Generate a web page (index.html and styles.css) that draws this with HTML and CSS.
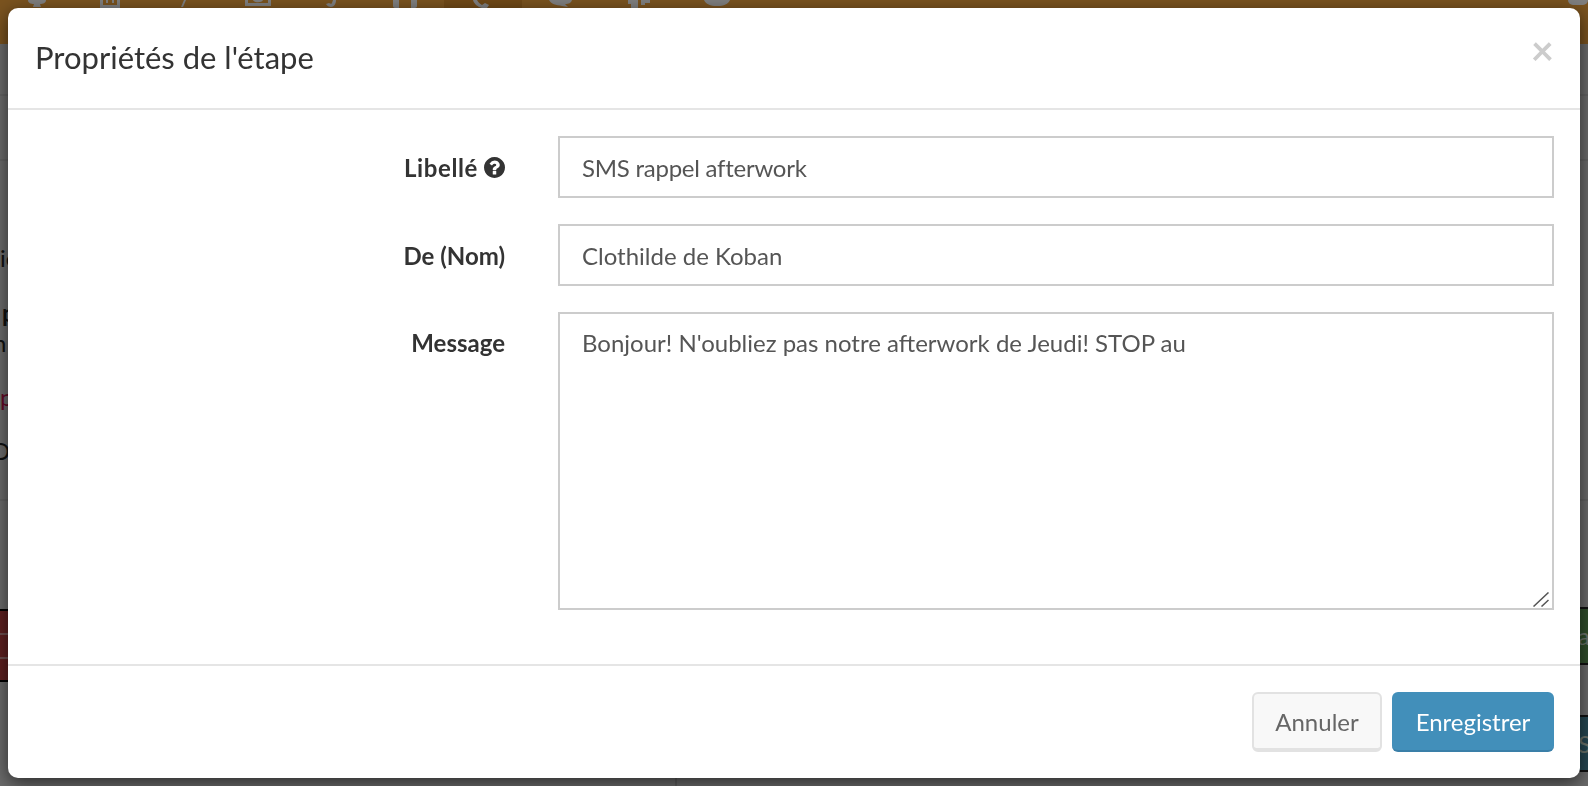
FILE: index.html
```html
<!DOCTYPE html>
<html lang="fr">

<head>
    <meta charset="UTF-8">
    <title>Propriétés de l'étape</title>
    <link rel="stylesheet" href="styles.css">
</head>

<body>
    <div class="page">
        <div class="topbar">
            <div class="tool"><svg width="18" height="8" viewBox="0 0 18 8"><path d="M0 0h18c0 3-3 4-6 4l1 3H5l1-3C3 4 0 3 0 0z" /></svg></div>
            <div class="tool"><svg width="20" height="8" viewBox="0 0 20 8"><path d="M0 0h3v5h14V0h3v8H0zM6 0h2v3H6zm6 0h2v3h-2z" /></svg></div>
            <div class="tool"><svg width="5" height="8" viewBox="0 0 5 8"><path d="M3 0h2L2 7H0z" /></svg></div>
            <div class="tool"><svg width="26" height="6" viewBox="0 0 26 6"><path d="M0 0h3v3h20V0h3v6H0zM8 0h10c-1 3-9 3-10 0z" /></svg></div>
            <div class="tool"><svg width="10" height="7" viewBox="0 0 10 7"><path d="M7 0h3c0 4-2 7-5 7-2 0-4-1-5-3l3-1c1 1 3 1 3 0z" /></svg></div>
            <div class="tool"><svg width="24" height="8" viewBox="0 0 24 8"><path d="M0 0h6v8H2c-1 0-2-1-2-2zm18 0h6v6c0 1-1 2-2 2h-4z" /></svg></div>
            <div class="tool tool-active"><svg width="20" height="8" viewBox="0 0 20 8"><path d="M0 0h4c1 2 3 4 5 5l3-2 4 2-2 3H9C5 7 1 4 0 0z" /></svg></div>
            <div class="tool"><svg width="23" height="7" viewBox="0 0 23 7"><path d="M0 0h23c-1 3-3 4-7 4l3 3-6-1C7 5 2 4 0 0z" /></svg></div>
            <div class="tool"><svg width="22" height="8" viewBox="0 0 22 8"><path d="M0 0h10v8H3V4H0zm13 0h9v3h-5v2h-4z" /></svg></div>
            <div class="tool"><svg width="26" height="6" viewBox="0 0 26 6"><path d="M0 0h26c-2 4-6 6-13 6S2 4 0 0z" /></svg></div>
            <div class="top-dot"></div>
        </div>

        <div class="content">
            <div class="side side-left">
                <div class="band band-a"></div>
                <div class="band band-b"></div>
                <div class="band band-c">
                    <p class="frag frag-1">ié</p>
                    <p class="frag frag-2">p</p>
                    <p class="frag frag-3">n</p>
                    <p class="frag frag-4">p</p>
                    <p class="frag frag-5">O</p>
                </div>
                <div class="band band-d"></div>
                <div class="red-block">
                    <div class="red-row"></div>
                    <div class="red-row"></div>
                    <div class="red-row"></div>
                </div>
            </div>
            <div class="middle"></div>
            <div class="side side-right">
                <div class="band band-a"></div>
                <div class="band band-b"></div>
                <div class="band band-c"></div>
                <div class="band band-e"></div>
                <div class="green-block">a</div>
                <div class="band band-f"></div>
                <div class="teal-block">S</div>
            </div>
        </div>
    </div>

    <div class="backdrop"></div>

    <div class="modal">
        <div class="modal-header">
            <h4>Propriétés de l'étape</h4>
            <button class="close">×</button>
        </div>
        <form class="modal-body">
            <label class="field-label label-wide">Libellé
                <svg class="help" width="21" height="21" viewBox="128 128 1536 1536"><path d="M1024 1376v-192q0-14-9-23t-23-9h-192q-14 0-23 9t-9 23v192q0 14 9 23t23 9h192q14 0 23-9t9-23zm256-672q0-88-55.5-163t-138.5-116-170-41q-243 0-371 213-15 24 8 42l132 100q7 6 19 6 16 0 25-12 53-68 86-92 34-24 86-24 48 0 85.5 26t37.5 59q0 38-20 61t-68 45q-63 28-115.5 86.5t-52.5 125.5v36q0 14 9 23t23 9h192q14 0 23-9t9-23q0-19 21.5-49.5t54.5-49.5q32-18 49-28.5t46-35 44.5-48 28-60.5 12.5-81zm384 192q0 209-103 385.5t-279.5 279.5-385.5 103-385.5-103-279.5-279.5-103-385.5 103-385.5 279.5-279.5 385.5-103 385.5 103 279.5 279.5 103 385.5z" /></svg>
            </label>
            <input class="field field-tight" type="text" value="SMS rappel afterwork">
            <label class="field-label">De (Nom)</label>
            <input class="field" type="text" value="Clothilde de Koban">
            <label class="field-label label-top">Message</label>
            <div class="area-wrap">
                <textarea class="field field-area">Bonjour! N'oubliez pas notre afterwork de Jeudi! STOP au</textarea>
                <svg class="grip" width="16" height="15" viewBox="0 0 16 15"><path d="M0.5 14.5L15.5 0.5M8.5 14.5L15.5 8" /></svg>
            </div>
        </form>
        <div class="modal-footer">
            <button class="btn btn-default">Annuler</button>
            <button class="btn btn-primary">Enregistrer</button>
        </div>
    </div>
</body>

</html>
```

FILE: styles.css
```css
* {
    box-sizing: border-box;
}

body {
    margin: 0;
    overflow: hidden;
    font-family: Lato, "Noto Sans", sans-serif;
    font-size: 24px;
    color: #333;
    background-color: #d6d6d6;
}

.page {
    display: flex;
    flex-direction: column;
    height: 786px;
}

.topbar {
    display: flex;
    height: 44px;
    background-color: #f4a63f;
}

.tool {
    display: flex;
    justify-content: center;
    align-items: flex-start;
    width: 73.6px;
    height: 44px;
}

.tool svg {
    fill: #fff;
}

.tool-active {
    width: 78px;
    margin-left: 2.4px;
    background-color: #e0932f;
}

.tool-active ~ .tool {
    width: 78px;
}

.top-dot {
    width: 20px;
    height: 5px;
    margin-left: auto;
    border-radius: 0 0 10px 10px;
    background-color: #fff;
}

.content {
    display: flex;
    flex: 1;
}

.side {
    display: flex;
    flex-direction: column;
    width: 30px;
    height: 742px;
}

.middle {
    width: 647px;
    border-right: 2px solid #bbb;
}

.side-right {
    margin-left: auto;
}

.band {
    border-bottom: 2px solid #c6c6c6;
}

.band-a {
    height: 52px;
}

.band-b {
    height: 65px;
}

.band-c {
    height: 340px;
}

.band-d {
    height: 108px;
    border-bottom: 0;
}

.band-e {
    height: 106px;
    border-bottom: 0;
}

.band-f {
    height: 50px;
    border-bottom: 0;
}

.frag {
    margin: 0;
    font-size: 24px;
    line-height: 30px;
    color: #222;
}

.frag-1 {
    padding-top: 82px;
}

.frag-2 {
    padding-top: 25px;
    padding-left: 2px;
    font-weight: bold;
}

.frag-3 {
    text-indent: -7px;
}

.frag-4 {
    padding-top: 24px;
    color: #c5124f;
}

.frag-5 {
    padding-top: 24px;
    text-indent: -9px;
}

.red-block {
    height: 73px;
    border-top: 2px solid #000;
    border-bottom: 2px solid #000;
    background-color: #bc3f3f;
}

.red-row {
    height: 24px;
    border-bottom: 2px solid #d89a9a;
}

.red-row:last-child {
    border-bottom: 0;
}

.green-block,
.teal-block {
    padding-left: 20px;
    font-size: 24px;
    line-height: 54px;
    color: #d8e8d8;
}

.green-block {
    height: 58px;
    border-top: 2px solid #222;
    border-bottom: 2px solid #222;
    background-color: #5f9a55;
}

.teal-block {
    height: 57px;
    border-top: 2px solid #222;
    border-bottom: 2px solid #222;
    background-color: #4a8fa5;
}

/* overlay */
.backdrop {
    position: fixed;
    top: 0;
    right: 0;
    bottom: 0;
    left: 0;
    background-color: rgba(0, 0, 0, 0.5);
}

.modal {
    position: absolute;
    top: 8px;
    left: 8px;
    width: 1572px;
    height: 770px;
    border-radius: 10px;
    background-color: #fff;
    box-shadow: 0 5px 18px rgba(0, 0, 0, 0.6);
}

.modal-header {
    display: flex;
    justify-content: space-between;
    align-items: center;
    height: 102px;
    padding: 0 26px 3px 27px;
    border-bottom: 2px solid #e5e5e5;
}

.modal-header h4 {
    margin: 0;
    font-size: 31px;
    font-weight: normal;
    color: #333;
}

.close {
    padding: 0;
    margin-top: -13px;
    border: none;
    background: none;
    font-family: inherit;
    font-size: 40px;
    font-weight: bold;
    line-height: 1;
    color: #ccc;
}

.modal-body {
    display: grid;
    grid-template-columns: 471px 1fr;
    grid-template-rows: 62px 62px 298px;
    column-gap: 53px;
    row-gap: 26px;
    height: 554px;
    padding: 26px;
}

.field-label {
    display: flex;
    justify-content: flex-end;
    align-items: center;
    gap: 6px;
    font-weight: bold;
    color: #333;
}

.label-wide {
    letter-spacing: 0.6px;
}

.label-top {
    align-items: flex-start;
    padding-top: 16px;
}

.help {
    fill: #333;
}

.field {
    width: 100%;
    padding: 0 22px;
    border: 2px solid #ccc;
    border-radius: 0;
    outline: none;
    font-family: inherit;
    font-size: 24px;
    color: #555;
    background-color: #fff;
}

.field-tight {
    letter-spacing: -0.25px;
}

.area-wrap {
    position: relative;
}

.field-area {
    display: block;
    height: 100%;
    padding-top: 14px;
    padding-bottom: 14px;
    line-height: 30px;
    resize: none;
}

.grip {
    position: absolute;
    right: 5px;
    bottom: 3px;
    fill: none;
    stroke: #555;
    stroke-width: 1.5;
}

.modal-footer {
    display: flex;
    justify-content: flex-end;
    gap: 10px;
    padding: 26px;
    border-top: 2px solid #e5e5e5;
}

.btn {
    height: 60px;
    border-radius: 6px;
    font-family: inherit;
    font-size: 24px;
}

.btn-default {
    width: 130px;
    border: 2px solid #e2e2e2;
    border-bottom-width: 4px;
    color: #666;
    background-color: #f8f8f8;
}

.btn-primary {
    width: 162px;
    border: none;
    border-bottom: 2px solid #3a7fa8;
    color: #fff;
    background-color: #428fba;
}
```
